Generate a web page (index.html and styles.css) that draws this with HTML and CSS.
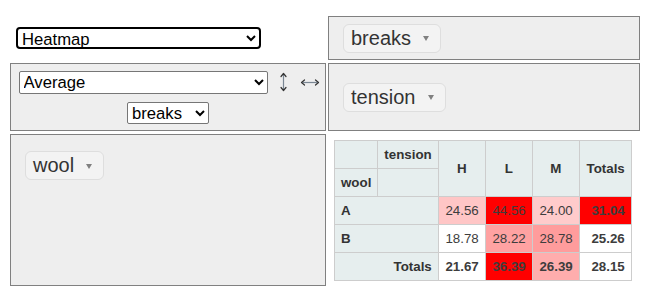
FILE: index.html
```html
<!DOCTYPE html>
<html lang="en">

<head>
    <meta charset="UTF-8">
    <meta name="viewport" content="width=device-width, initial-scale=1.0">
    <title>Pivot table</title>
    <link rel="stylesheet" href="styles.css">
</head>

<body>
    <div class="pvtUi">
        <div class="pvtRenderer">
            <select class="pvtRendererSelect">
                <option>Heatmap</option>
                <option>Table</option>
                <option>Table Barchart</option>
            </select>
        </div>

        <ul class="pvtAxisContainer pvtUnused pvtHorizList">
            <li><span class="pvtAttr">breaks<span class="pvtTriangle"></span></span></li>
        </ul>

        <div class="pvtVals">
            <div class="pvtAggLine">
                <select class="pvtAggregator">
                    <option>Average</option>
                    <option>Count</option>
                    <option>Sum</option>
                </select>
                <a class="pvtRowOrder" role="button" title="↕">
                    <svg width="19" height="23" viewBox="0 0 19 23">
                        <line class="stem" x1="9.5" y1="2.5" x2="9.5" y2="19.5" />
                        <polyline class="head" points="7,5.5 9.5,2.5 12,5.5" />
                        <polyline class="head" points="7,16.5 9.5,19.5 12,16.5" />
                    </svg>
                </a>
                <a class="pvtColOrder" role="button" title="↔">
                    <svg width="21" height="23" viewBox="0 0 21 23">
                        <line class="stem" x1="2.5" y1="11.5" x2="19.5" y2="11.5" />
                        <polyline class="head" points="5.5,9 2.5,11.5 5.5,14" />
                        <polyline class="head" points="16.5,9 19.5,11.5 16.5,14" />
                    </svg>
                </a>
            </div>
            <select class="pvtAttrDropdown">
                <option>breaks</option>
            </select>
        </div>

        <ul class="pvtAxisContainer pvtCols pvtHorizList">
            <li><span class="pvtAttr">tension<span class="pvtTriangle"></span></span></li>
        </ul>

        <ul class="pvtAxisContainer pvtRows pvtVertList">
            <li><span class="pvtAttr">wool<span class="pvtTriangle"></span></span></li>
        </ul>

        <div class="pvtRendererArea">
            <table class="pvtTable">
                <thead>
                    <tr>
                        <th></th>
                        <th class="pvtAxisLabel">tension</th>
                        <th class="pvtColLabel" rowspan="2">H</th>
                        <th class="pvtColLabel" rowspan="2">L</th>
                        <th class="pvtColLabel" rowspan="2">M</th>
                        <th class="pvtTotalLabel pvtRowTotalLabel" rowspan="2">Totals</th>
                    </tr>
                    <tr>
                        <th class="pvtAxisLabel">wool</th>
                        <th></th>
                    </tr>
                </thead>
                <tbody>
                    <tr>
                        <th class="pvtRowLabel" colspan="2">A</th>
                        <td class="pvtVal" style="background-color: rgb(255, 198, 198)">24.56</td>
                        <td class="pvtVal" style="background-color: rgb(255, 0, 0)">44.56</td>
                        <td class="pvtVal" style="background-color: rgb(255, 203, 203)">24.00</td>
                        <td class="pvtTotal rowTotal" style="background-color: rgb(255, 0, 0)">31.04</td>
                    </tr>
                    <tr>
                        <th class="pvtRowLabel" colspan="2">B</th>
                        <td class="pvtVal" style="background-color: rgb(255, 255, 255)">18.78</td>
                        <td class="pvtVal" style="background-color: rgb(255, 162, 162)">28.22</td>
                        <td class="pvtVal" style="background-color: rgb(255, 156, 156)">28.78</td>
                        <td class="pvtTotal rowTotal" style="background-color: rgb(255, 255, 255)">25.26</td>
                    </tr>
                    <tr>
                        <th class="pvtTotalLabel pvtColTotalLabel" colspan="2">Totals</th>
                        <td class="pvtTotal colTotal" style="background-color: rgb(255, 255, 255)">21.67</td>
                        <td class="pvtTotal colTotal" style="background-color: rgb(255, 0, 0)">36.39</td>
                        <td class="pvtTotal colTotal" style="background-color: rgb(255, 173, 173)">26.39</td>
                        <td class="pvtGrandTotal">28.15</td>
                    </tr>
                </tbody>
            </table>
        </div>
    </div>
</body>

</html>
```

FILE: styles.css
```css
* {
    box-sizing: border-box;
}

body {
    margin: 0;
    font-family: "Liberation Sans", Arial, sans-serif;
    color: #333;
    background-color: #fff;
}

.pvtUi {
    display: grid;
    grid-template-columns: 316px 312px;
    grid-template-rows: 44px 68px 152px;
    gap: 3px 2px;
    margin: 16px 0 0 10px;
}

select {
    font-family: "Liberation Sans", Arial, sans-serif;
    font-size: 16.67px;
    color: #000;
    background-color: #fff;
    border: 1px solid #767676;
    border-radius: 2px;
}

/* renderer */
.pvtRenderer {
    display: flex;
    align-items: center;
    padding-left: 6px;
}

.pvtRendererSelect {
    width: 245px;
    height: 22px;
    border: 2px solid #000;
    border-radius: 4px;
}

/* drop zones */
.pvtAxisContainer {
    margin: 0;
    border: 1px solid gray;
    background-color: #eee;
    list-style-type: none;
}

.pvtHorizList {
    display: flex;
    align-items: center;
    padding: 0 0 0 14px;
}

.pvtVertList {
    padding: 16px 0 0 14px;
}

.pvtAttr {
    display: inline-flex;
    align-items: center;
    height: 29px;
    padding: 0 11px 0 7px;
    font-size: 20px;
    white-space: nowrap;
    background-color: #f3f3f3;
    border: 1px solid #dedede;
    border-radius: 6px;
}

.pvtTriangle {
    width: 0;
    height: 0;
    margin-left: 12px;
    margin-top: 1px;
    border-left: 3px solid transparent;
    border-right: 3px solid transparent;
    border-top: 5px solid #808080;
}

/* aggregator */
.pvtVals {
    display: flex;
    flex-direction: column;
    align-items: center;
    gap: 8px;
    padding-top: 7px;
    border: 1px solid gray;
    background-color: #eee;
}

.pvtAggLine {
    display: flex;
    align-items: center;
}

.pvtAggregator {
    width: 249px;
    height: 23px;
}

.pvtRowOrder,
.pvtColOrder {
    display: block;
    width: 19px;
    height: 23px;
    margin-left: 6px;
    cursor: pointer;
}

.pvtRowOrder svg,
.pvtColOrder svg {
    display: block;
    overflow: visible;
    fill: none;
    stroke-width: 1.2;
}

.stem {
    stroke: #7a8794;
}

.head {
    stroke: #333;
    stroke-linecap: round;
    stroke-linejoin: round;
}

.pvtAttrDropdown {
    width: 82px;
    height: 22px;
}

/* output table */
.pvtRendererArea {
    padding: 6px;
}

.pvtTable {
    border-collapse: collapse;
    font-size: 13.33px;
    line-height: 15px;
    text-align: left;
}

.pvtTable th {
    padding: 6px;
    font-weight: bold;
    color: #333;
    background-color: #e6eeee;
    border: 1px solid #cdcdcd;
}

.pvtTable td {
    width: 47px;
    padding: 6px;
    text-align: right;
    vertical-align: top;
    color: #3d3d3d;
    background-color: #fff;
    border: 1px solid #cdcdcd;
}

.pvtTable .rowTotal,
.pvtTable .pvtGrandTotal {
    width: 52px;
}

.pvtTable .pvtColLabel {
    text-align: center;
}

.pvtTable .pvtTotalLabel {
    text-align: right;
}

.pvtTotal,
.pvtGrandTotal {
    font-weight: bold;
}
```
